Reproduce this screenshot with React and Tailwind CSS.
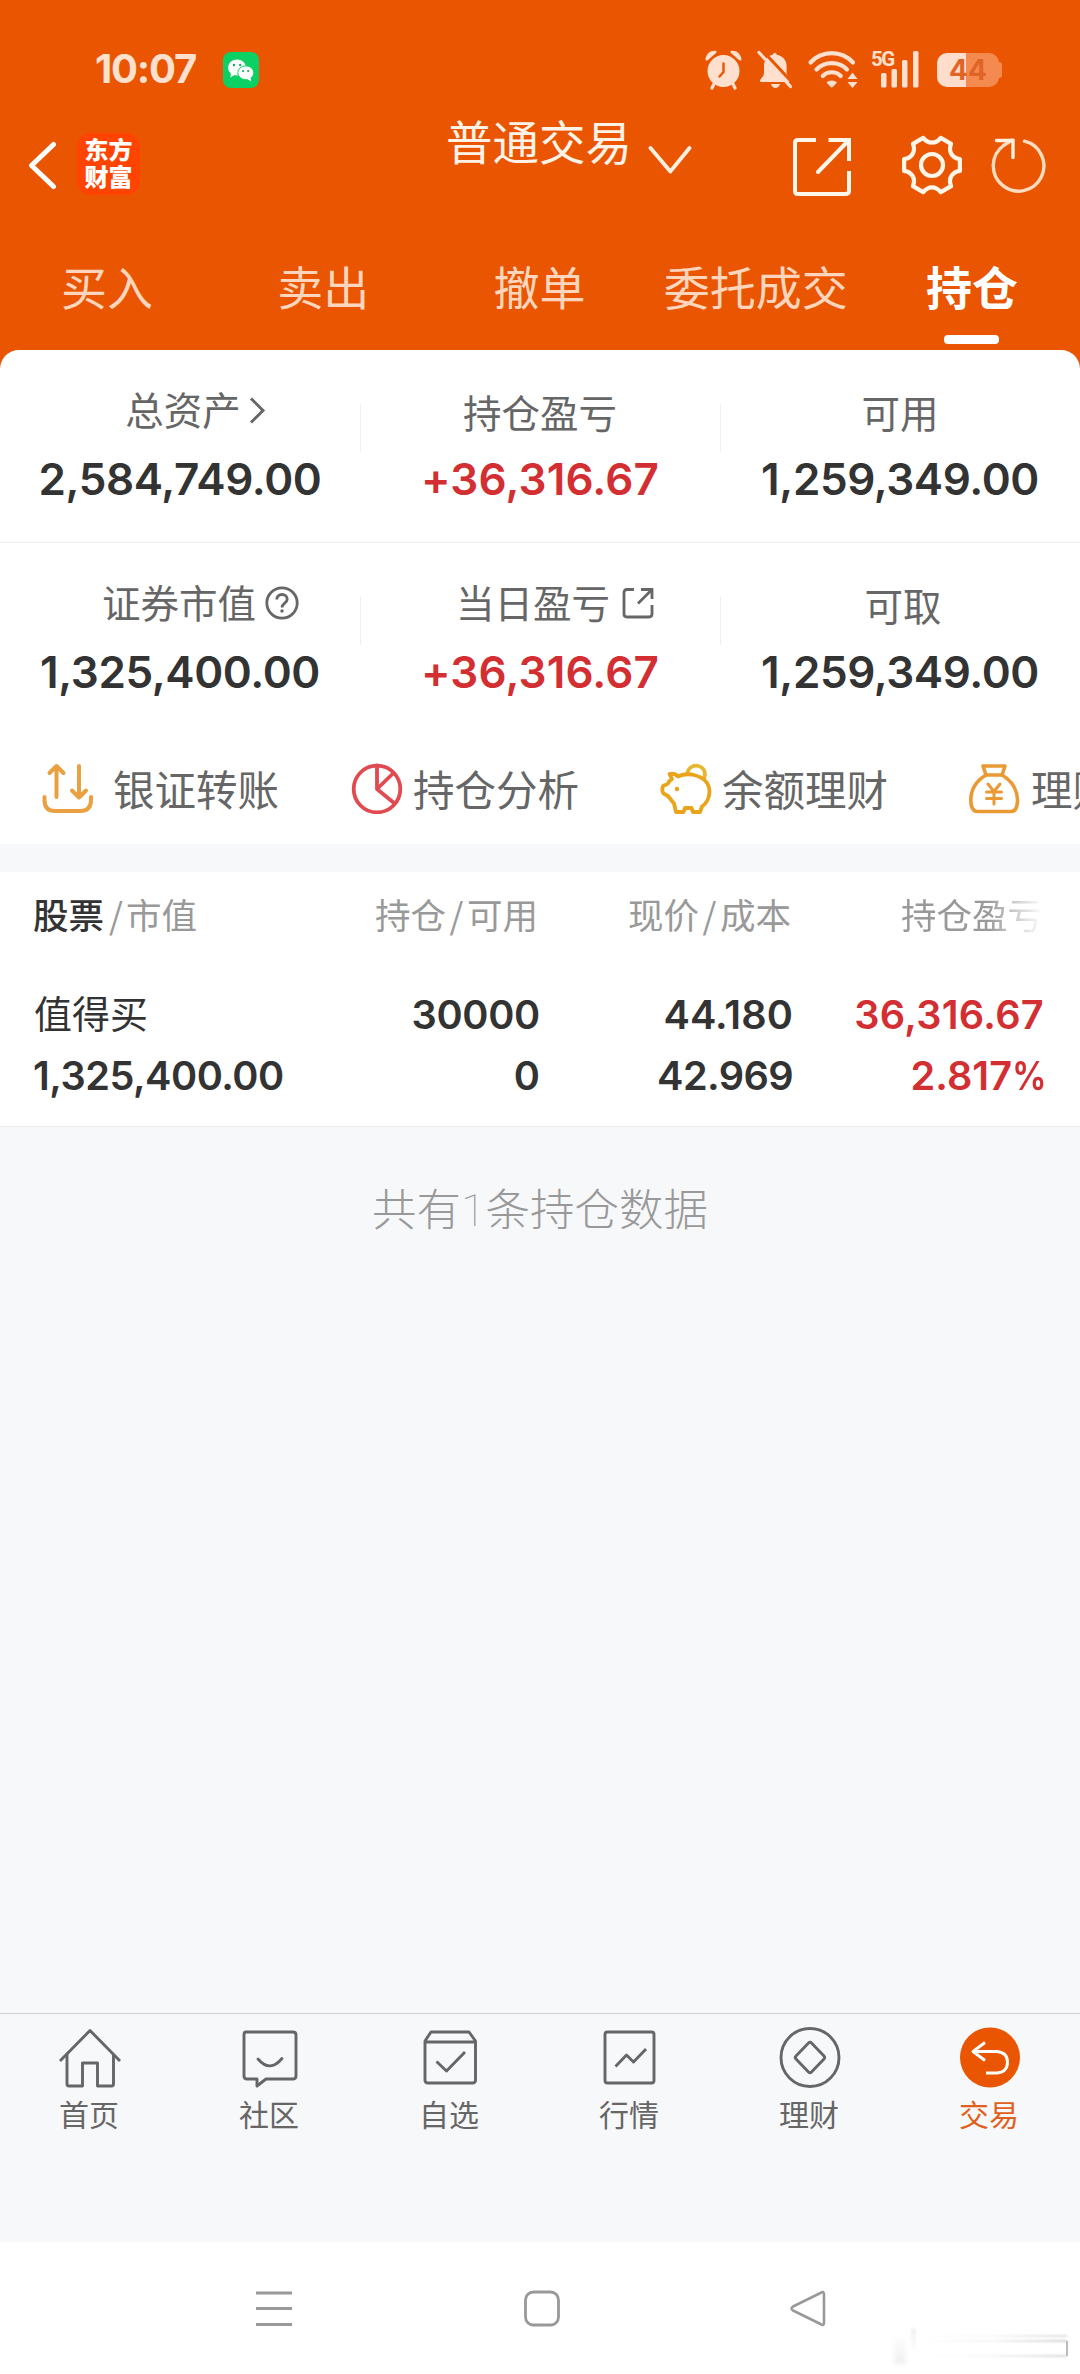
import React from "react";

const CJK = "font-['Noto_Sans_CJK_SC','Noto_Sans',sans-serif]";
const NUM = "font-['Inter','Noto_Sans_CJK_SC',sans-serif]";

function gearPath(cx, cy) {
  const at = (deg, r) => {
    const a = (deg * Math.PI) / 180;
    return `${(cx + r * Math.cos(a)).toFixed(2)} ${(cy + r * Math.sin(a)).toFixed(2)}`;
  };
  let d = `M${at(-12, 28.5)}`;
  for (let i = 0; i < 6; i++) {
    const t = i * 60;
    d += `L${at(t + 12, 28.5)}C${at(t + 20, 21)} ${at(t + 40, 21)} ${at(t + 48, 28.5)}`;
  }
  return d + "Z";
}

function StatusBar() {
  return (
    <div className="flex h-[105px] items-start text-[#ffe0cf]">
      <span className={`${NUM} ml-[95px] mt-12 w-[104px] whitespace-nowrap text-[40px] font-bold leading-[41px] tracking-[-1.2px]`}>
        10:07
      </span>
      <svg className="ml-6 mt-[52px]" width="36" height="36" viewBox="0 0 36 36">
        <rect width="36" height="36" rx="8" fill="#0bd063" />
        <ellipse cx="14" cy="15.5" rx="9" ry="8" fill="#fff" />
        <path d="M8 21l-.6 4.6 5-3z" fill="#fff" />
        <ellipse cx="22.8" cy="20.8" rx="8" ry="7" fill="#fff" stroke="#0bd063" strokeWidth="1" />
        <path d="M24 27l4.2 2.2-.6-4z" fill="#fff" />
        <circle cx="11" cy="13" r="1.2" fill="#0bb055" />
        <circle cx="17.2" cy="13" r="1.2" fill="#0bb055" />
        <circle cx="20" cy="19" r="1.1" fill="#0bb055" />
        <circle cx="25.2" cy="19" r="1.1" fill="#0bb055" />
      </svg>
      <svg className="ml-[446px] mt-[50px]" width="37" height="40" viewBox="0 0 37 40">
        <g fill="currentColor">
          <circle cx="18.5" cy="21" r="16" />
          <path d="M0.5 9.5C1 4 5 0.5 10.5 0.8C11.5 1 12 2 11 3L3 10C1.700 10.800 .5 10.500 .5 9.500zM36.500 9.500C36 4 32 .5 26.500 .8C25.500 1 25 2 26 3L34 10C35.300 10.800 36.500 10.500 36.500 9.500z" />
        </g>
        <path d="M9 34l-2 4M28 34l2 4" stroke="currentColor" strokeWidth="3.200" strokeLinecap="round" />
        <path d="M18.500 13.500v8.500l-4 4.500" fill="none" stroke="#e95500" strokeWidth="2.400" strokeLinecap="round" />
      </svg>
      <svg className="ml-[14px] mt-[50px]" width="40" height="40" viewBox="0 0 40 40">
        <path
          d="M18.800 3c1 0 1.800.6 2 1.700c6 1 9.800 5.500 9.800 11.500v6.500c0 3 4.500 5.600 4.500 8c0 1-.8 1.300-1.600 1.300H5.500c-1.500 0-2-1.200-1.200-2.200l2.500-3.300c1-1.500 1.200-2.500 1.200-4.800v-5.500c0-6 3-10.500 8.800-11.500c.2-1.100 1-1.700 2-1.700zM15 34h9c-.8 2.500-2.500 4-4.500 4S15.800 36.500 15 34z"
          fill="currentColor"
        />
        <path d="M5 -1L39 35.500" stroke="#e95500" strokeWidth="3" />
        <path d="M3 2.500L34.500 36.500" stroke="currentColor" strokeWidth="3.200" strokeLinecap="round" />
      </svg>
      <svg className="ml-[11px] mt-[50px]" width="52" height="39" viewBox="0 0 52 39">
        <g fill="none" stroke="currentColor" strokeWidth="4.200" strokeLinecap="round">
          <path d="M3.500 12.500C15 0 34.500 0 46 12.500" />
          <path d="M9.500 19.500C17.500 11 32 11 40 19.500" />
          <path d="M15.800 26C20.500 21 29 21 33.700 26" />
        </g>
        <path d="M19.500 32.500C22 29.800 27.500 29.800 30 32.500L25.800 37c-.6.6-1.500.6-2.100 0z" fill="currentColor" />
        <path d="M45.500 22.500l5 6.500h-10zM45.500 38l5-6h-10z" fill="currentColor" />
      </svg>
      <div className="relative ml-3 mt-[50px] h-[38px] w-[52px]">
        <span className="absolute -top-px left-0 whitespace-nowrap font-['Roboto',sans-serif] text-[20.500px] font-bold leading-[20px] tracking-[-1.500px]">
          5G
        </span>
        <svg width="52" height="38" viewBox="0 0 52 38" fill="currentColor">
          <rect x="10" y="23" width="5.500" height="14.500" rx="1.500" />
          <rect x="20.500" y="19" width="5.500" height="18.500" rx="1.500" />
          <rect x="31" y="10" width="5.500" height="27.500" rx="1.500" />
          <rect x="42" y="1" width="5.500" height="36.500" rx="1.500" />
        </svg>
      </div>
      <div className="ml-[14px] mt-[53px] flex items-center">
        <div className={`${NUM} flex h-[34px] w-[62px] items-center justify-center rounded-[10px] bg-[linear-gradient(90deg,#ffdccb_47%,#f58a50_47%)] text-[28px] font-bold leading-[34px] text-[#e06425]`}>
          44
        </div>
        <div className="h-4 w-[3px] rounded-r-[3px] bg-[#f58a50]" />
      </div>
    </div>
  );
}

function TitleRow() {
  return (
    <div className="flex h-[108px] items-start">
      <svg className="ml-[27px] mt-9" width="32" height="50" viewBox="0 0 32 50" fill="none" stroke="#fff" strokeWidth="5" strokeLinecap="round" strokeLinejoin="round">
        <path d="M26.500 3.500L4.500 24.500L26.500 45.500" />
      </svg>
      <div className={`${CJK} ml-[18px] mt-[28px] h-[62px] w-[63px] rounded-[14px] bg-[#ff4300] px-[7px] pt-[2px] text-center text-[24px] font-black leading-[27px] text-white`}>
        东方财富
      </div>
      <h1 className={`${CJK} ml-[306px] mt-[12px] w-[187px] whitespace-nowrap text-[46.500px] font-normal leading-[46px] text-[#fff3e8]`}>普通交易</h1>
      <svg className="ml-[15px] mt-[39px]" width="44" height="32" viewBox="0 0 44 32" fill="none" stroke="#fff0e0" strokeWidth="3.800" strokeLinecap="round" strokeLinejoin="round">
        <path d="M2.500 4L22.300 27.500L41.500 4" />
      </svg>
      <svg className="ml-[99px] mt-[31px]" width="62" height="62" viewBox="0 0 62 62" fill="none" stroke="#fff6ea" strokeWidth="4">
        <path d="M25 4H7Q4 4 4 7V55Q4 58 7 58H54Q58 58 58 55V35" />
        <path d="M37.500 4H58V25M58 4L27 36" />
        <path d="M27 36l.1-.1" strokeLinecap="round" />
      </svg>
      <svg className="ml-[47px] mt-[28px]" width="64" height="64" viewBox="0 0 64 64" fill="none" stroke="#fff6ea" strokeWidth="4.200" strokeLinejoin="round">
        <path d={gearPath(32, 32)} />
        <circle cx="32" cy="32" r="11" />
      </svg>
      <svg className="ml-[26px] mt-[30px]" width="58" height="62" viewBox="0 0 58 62" fill="none" stroke="#fff0e0" strokeWidth="3.400">
        <path d="M34.500 6.200A25.300 25.300 0 1 1 13.500 10.500L22 5" stroke="#ffdcc0" strokeLinecap="round" />
        <path d="M6.500 5.500H23V22.500" strokeLinecap="round" />
      </svg>
    </div>
  );
}

function Tabs() {
  const tabs = ["买入", "卖出", "撤单", "委托成交", "持仓"];
  return (
    <nav className={`${CJK} -ml-px grid h-[137px] grid-cols-5 text-[46px] leading-[46px]`}>
      {tabs.map((t, i) => (
        <div key={t} className="flex flex-col items-center pt-[49px]">
          <span className={i === 4 ? "whitespace-nowrap font-bold text-white" : "whitespace-nowrap text-[#ffd6bd]"}>{t}</span>
          {i === 4 && <span className="mt-[27px] h-[9px] w-[55px] rounded bg-white" />}
        </div>
      ))}
    </nav>
  );
}

function Metric({ label, value, red, icon, low, divider, shift }) {
  return (
    <div className="relative flex flex-col items-center">
      <div className={`${CJK} flex h-[50px] items-center whitespace-nowrap text-[38.500px] leading-[50px] text-[#666] ${low ? "mt-[2px] mb-[2px]" : "-mt-px mb-[5px]"} ${shift || ""}`}>
        {label}
        {icon}
      </div>
      <div className={`${NUM} mt-[19px] h-[44px] text-[44px] font-semibold leading-[44px] ${red ? "tracking-[0.15px] text-[#d32f33]" : "tracking-[-0.4px] text-[#333]"}`}>
        {value}
      </div>
      {divider && <div className="absolute right-[-1px] top-[20px] h-[48px] w-px bg-[#efefef]" />}
    </div>
  );
}

const chevronIcon = (
  <svg className="ml-2 mt-[3px]" width="20" height="32" viewBox="0 0 20 32" fill="none" stroke="#666" strokeWidth="3">
    <path d="M2 4.500L14 16.500L2 28.500" />
  </svg>
);
const helpIcon = (
  <svg className="ml-2 mt-[3px]" width="36" height="36" viewBox="0 0 36 36" fill="none" stroke="#666" strokeWidth="2.800">
    <circle cx="18" cy="18" r="15.200" />
    <path d="M12.800 14.500c0-3 2.200-5 5.200-5s5.200 2 5.200 4.700c0 3.800-5.200 4-5.200 8.300" />
    <circle cx="18" cy="26" r="1" fill="#666" strokeWidth="1.500" />
  </svg>
);
const shareIcon = (
  <svg className="ml-[11px] mt-[3px]" width="34" height="34" viewBox="0 0 34 34" fill="none" stroke="#666" strokeWidth="2.800">
    <path d="M13 3.500H6Q3 3.500 3 6.500V28Q3 31 6 31H28Q31 31 31 28V19M20 3.500H31V13M31 3.500L17 17.500" />
  </svg>
);

const ACTIONS = [
  {
    label: "银证转账",
    gap: "gap-[19px]",
    icon: (
      <g stroke="#e9a040" strokeWidth="4">
        <path d="M14.500 34V3M7.500 10L14.500 3L21.500 10M37 3V34.500M30 27.500L37 34.500L44 27.500" />
        <path d="M2.500 34v3Q2.500 48 13 48H38Q49 48 49 37V34" />
      </g>
    ),
  },
  {
    label: "持仓分析",
    gap: "gap-[10px]",
    icon: (
      <g stroke="#e04a50" strokeWidth="3.800">
        <circle cx="26" cy="26" r="23.300" />
        <path d="M26 2.500V26L42.500 10M26 26L43 40" />
      </g>
    ),
  },
  {
    label: "余额理财",
    gap: "gap-[10px]",
    icon: (
      <g stroke="#eaa41a" strokeWidth="3.800">
        <path d="M27 10.500C29 4 34 2 38.500 3C44 4.500 46.500 10 44 15.500" stroke="#e6b830" />
        <path d="M9.500 11Q15 10 18 13.500Q24 10.500 32 11.500Q49.500 15 49.500 29Q49 38.500 42 43.500L40 49H33L31.500 45H25L23.500 49H16L14 40.500L8 33L3.500 30.500Q1 26.500 3.500 22.500Q8.500 21.500 9 18.500L12 16Z" />
        <circle cx="17" cy="26" r="2.200" fill="#eaa41a" stroke="none" />
      </g>
    ),
  },
  {
    label: "理财产品",
    gap: "gap-[10px]",
    icon: (
      <g stroke="#e99a35" strokeWidth="3.600">
        <path d="M14 3H36L33 12H17Z" />
        <path d="M17 12Q2 21 1.800 37Q2 48.500 8.500 48.500H42Q48.500 48.500 48.500 37Q48 21 33 12" />
        <path d="M19 21L25 28.500L31 21M17.500 29H32.500M17.500 35.500H32.500M25 29V41" strokeWidth="3" />
      </g>
    ),
  },
];

function Actions() {
  return (
    <div className="flex h-[130px] overflow-hidden pl-[42px] pt-[49px]">
      {ACTIONS.map((a) => (
        <div key={a.label} className={`flex h-[50px] w-[309px] shrink-0 items-center whitespace-nowrap ${a.gap}`}>
          <svg className="shrink-0" width="52" height="51" viewBox="0 0 52 51" fill="none" strokeLinecap="round" strokeLinejoin="round">
            {a.icon}
          </svg>
          <span className={`${CJK} text-[41.500px] leading-[50px] text-[#666]`}>{a.label}</span>
        </div>
      ))}
    </div>
  );
}

function Holdings() {
  return (
    <section className="h-[255px] border-b border-[#ebebeb] bg-white">
      <div className={`${CJK} grid h-[84px] grid-cols-[329px_175px_253px_252px] pl-[34px] pt-[20px] text-[35.500px] leading-[44px] text-[#999]`}>
        <div className="-ml-px whitespace-nowrap">
          <span className="font-medium text-[#333]">股票</span>
          <span className="ml-[5px] mr-[3px]">/</span>市值
        </div>
        <div className="whitespace-nowrap text-right">持仓<span className="mx-[3.500px]">/</span>可用</div>
        <div className="whitespace-nowrap text-right">现价<span className="mx-[3.500px]">/</span>成本</div>
        <div className="whitespace-nowrap text-right [mask-image:linear-gradient(90deg,#000_78%,transparent_100%)]">持仓盈亏</div>
      </div>
      <div className={`${NUM} grid grid-cols-[329px_177px_253px_251px] gap-y-[17px] pl-[34px] pt-[37px] text-[39.700px] font-semibold leading-[44px] text-[#333]`}>
        <div className={`${CJK} -mt-[3px] whitespace-nowrap text-[38px] font-normal`}>值得买</div>
        <div className="text-right tracking-[-0.3px]">30000</div>
        <div className="text-right tracking-[0.1px]">44.180</div>
        <div className="text-right tracking-[0.3px] text-[#d32f33]">36,316.67</div>
        <div className="-ml-px tracking-[-0.5px]">1,325,400.00</div>
        <div className="text-right">0</div>
        <div className="text-right tracking-[-0.6px]">42.969</div>
        <div className="text-right text-[#d32f33]">2.817<span className="inline-block w-[32px] origin-left scale-x-[0.87]">%</span></div>
      </div>
    </section>
  );
}

const NAV = [
  {
    label: "首页",
    icon: (
      <>
        <path d="M2 34L32 3.500L62 34" />
        <path d="M9 27V57Q9 59 11 59H24.500V36H39.500V59H53.500Q55.500 59 55.500 57V27" />
      </>
    ),
  },
  {
    label: "社区",
    icon: (
      <>
        <path d="M8 5H55Q58 5 58 8V49Q58 52 55 52H28L19 59V52H9Q6 52 6 49V8Q6 5 8 5Z" />
        <path d="M20 32Q32 46 44 31.500" strokeLinecap="round" />
      </>
    ),
  },
  {
    label: "自选",
    icon: (
      <>
        <path d="M7 14L13 5H51L57.500 14V53Q57.500 56 54.500 56H10Q7 56 7 53ZM7 15H57.500" />
        <path d="M18.500 34.500L28.500 44L47 25" />
      </>
    ),
  },
  {
    label: "行情",
    icon: (
      <>
        <rect x="7" y="5" width="49" height="51" rx="2.500" />
        <path d="M17.500 39.500L28.500 28L35.500 35L48 22" />
      </>
    ),
  },
  {
    label: "理财",
    icon: (
      <>
        <circle cx="32" cy="30.500" r="29" />
        <path d="M30.500 16Q32 14.500 33.500 16L46 29Q47.500 30.500 46 32L33.500 45Q32 46.500 30.500 45L18 32Q16.500 30.500 18 29Z" />
      </>
    ),
  },
  {
    label: "交易",
    active: true,
    icon: (
      <>
        <circle cx="32" cy="30.500" r="30" fill="#e95500" stroke="none" />
        <path d="M27 15.500L15 24.500L27 33.500M15 24.500H39Q49.500 25.500 49.500 35Q49.500 45 39 46H28" stroke="#fff" />
      </>
    ),
  },
];

function BottomNav() {
  return (
    <nav className="grid h-[229px] grid-cols-6 border-t border-[#cfd1d4]">
      {NAV.map((n) => (
        <div key={n.label} className="flex flex-col items-center pt-[13px]">
          <svg width="64" height="62" viewBox="0 0 64 62" fill="none" stroke="#666" strokeWidth="2.900" strokeLinejoin="round">
            {n.icon}
          </svg>
          <span className={`${CJK} mt-[4px] -ml-[2px] text-[30px] leading-[40px] ${n.active ? "text-[#e06020]" : "text-[#666]"}`}>{n.label}</span>
        </div>
      ))}
    </nav>
  );
}

function SystemNav() {
  return (
    <div className="relative h-[132px] bg-white">
      <div className="flex pl-[255px] pt-[48px]">
        <svg width="38" height="38" viewBox="0 0 38 38" stroke="#999" strokeWidth="3">
          <path d="M1 3H37M1 18.500H37M1 34.500H37" />
        </svg>
        <svg className="ml-[230px]" width="38" height="38" viewBox="0 0 38 38" fill="none" stroke="#999" strokeWidth="2.800">
          <rect x="2.500" y="2" width="33" height="33" rx="8" />
        </svg>
        <svg className="ml-[228px]" width="38" height="38" viewBox="0 0 38 38" fill="none" stroke="#999" strokeWidth="2.600" strokeLinejoin="round">
          <path d="M31.500 3Q35 .5 35 4.500V32.500Q35 36.500 31.500 34L4 20.500Q1 18.500 4 16.500Z" />
        </svg>
      </div>
      <div className="absolute left-[894px] top-[92px] h-[30px] w-[12px] bg-gradient-to-b from-transparent to-[#f0f0f0] blur-[2px]" />
      <div className="absolute left-[911px] top-[86px] h-[26px] w-[5px] bg-gradient-to-b from-[#f0f0f0] to-transparent blur-[1px]" />
      <div className="absolute left-[918px] top-[93px] h-[2px] w-[149px] bg-gradient-to-r from-transparent via-[#f8f8f8] to-[#dcdcdc] blur-[1px]" />
      <div className="absolute left-[918px] top-[98px] h-[2px] w-[149px] bg-gradient-to-r from-transparent via-[#f4f4f4] to-[#d0d0d0] blur-[1px]" />
      <div className="absolute left-[918px] top-[113px] h-[2px] w-[149px] bg-gradient-to-r from-transparent via-[#f6f6f6] to-[#d6d6d6] blur-[1px]" />
      <div className="absolute left-[1066px] top-[99px] h-[15px] w-[1.500px] bg-[#bbb]" />
    </div>
  );
}

export default function App() {
  return (
    <div lang="zh-CN" className="flex h-[2374px] w-[1080px] flex-col overflow-hidden bg-[#f7f8fa]">
      <header className="h-[350px] shrink-0 bg-[#e95500]">
        <StatusBar />
        <TitleRow />
        <Tabs />
      </header>
      <div className="h-[494px] shrink-0 bg-[linear-gradient(#e95500_40px,#fff_40px)]">
        <div className="h-full rounded-t-[19px] bg-white">
          <div className="grid h-[193px] grid-cols-3 border-b border-[#ececec] pt-[34px]">
            <Metric label="总资产" value="2,584,749.00" icon={chevronIcon} shift="pl-[34px]" divider />
            <Metric label="持仓盈亏" value="+36,316.67" red low divider />
            <Metric label="可用" value="1,259,349.00" low />
          </div>
          <div className="grid h-[171px] grid-cols-3 pt-[34px]">
            <Metric label="证券市值" value="1,325,400.00" icon={helpIcon} shift="pl-[42px]" divider />
            <Metric label="当日盈亏" value="+36,316.67" red icon={shareIcon} shift="pl-[31px]" divider />
            <Metric label="可取" value="1,259,349.00" low shift="pl-[6px]" />
          </div>
          <Actions />
        </div>
      </div>
      <div className="mt-[28px] shrink-0">
        <Holdings />
      </div>
      <p className={`${CJK} mt-[55px] shrink-0 text-center text-[44.500px] font-light leading-[50px] text-[#999]`}>
        共有<span className="font-['Roboto',sans-serif] font-thin">1</span>条持仓数据
      </p>
      <div className="mt-auto shrink-0">
        <BottomNav />
        <SystemNav />
      </div>
    </div>
  );
}
